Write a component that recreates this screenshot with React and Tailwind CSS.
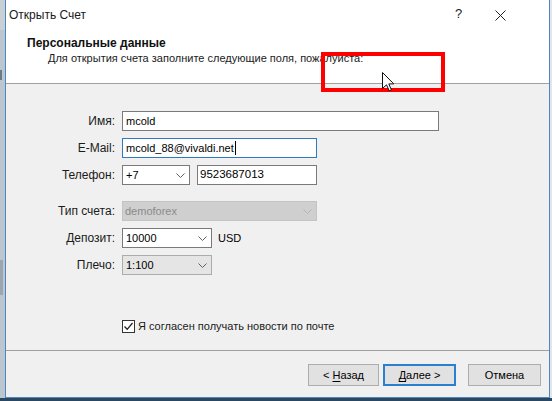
import React from "react";

function Chevron({ color = "#606060" }) {
  return (
    <svg width="9" height="5" viewBox="0 0 9 5">
      <path d="M0.5 0.5 L4.5 4.5 L8.5 0.5" fill="none" stroke={color} strokeWidth="1" />
    </svg>
  );
}

function Row({ label, top, children }) {
  return (
    <div className={`flex items-center h-[20px] ${top}`}>
      <div className="w-[109px] text-right text-[12px] leading-[14px] text-[#1a1a1a]">{label}</div>
      <div className="ml-[7px] flex items-center h-[20px]">{children}</div>
    </div>
  );
}

export default function App() {
  return (
    <div className="w-[552px] h-[401px] overflow-hidden relative bg-[#2b4862] flex flex-col font-['Liberation_Sans',Arial,sans-serif] text-black">
      <div className="flex h-[398px]">
        {/* background strip on the left */}
        <div className="w-[5px] h-full bg-[#bcc6ce] flex flex-col">
          <div className="h-[30px] bg-[#c8d0d6]" />
          <div className="h-[10px] w-[2px] bg-[#6b7a88] mt-[40px]" />
          <div className="h-[35px] w-[3px] bg-[#9aa7b3] mt-[180px]" />
        </div>
        {/* window */}
        <div className="w-[545px] h-full flex flex-col border-l border-r border-b border-[#4f86bf] bg-[#f0f0f0]">
          {/* header */}
          <div className="h-[84px] bg-white border-b border-[#a0a0a0] flex flex-col">
            <div className="h-[29px] flex items-center pl-[3px] relative">
              <span className="text-[12px] leading-[14px] text-[#1a1a1a]">Открыть Счет</span>
              <span className="absolute left-[449px] top-[7px] text-[13px] leading-[14px] text-[#222]">?</span>
              <svg className="absolute left-[489px] top-[10px]" width="11" height="11" viewBox="0 0 11 11">
                <path d="M0.5 0.5 L10.5 10.5 M10.5 0.5 L0.5 10.5" stroke="#222" strokeWidth="1" />
              </svg>
            </div>
            <div className="mt-[7px] pl-[21px] text-[12px] leading-[14px] font-bold text-[#111]">Персональные данные</div>
            <div className="mt-[1px] pl-[42px] text-[11px] leading-[14px] text-[#1a1a1a]">
              Для открытия счета заполните следующие поля, пожалуйста:
            </div>
          </div>
          {/* body */}
          <div className="h-[267px] flex flex-col border-b border-[#a0a0a0]">
            <Row label="Имя:" top="mt-[27px]">
              <div className="w-[317px] h-[20px] bg-white border border-[#7a7a7a] flex items-center pl-[3px] text-[11px]">mcold</div>
            </Row>
            <Row label="E-Mail:" top="mt-[7px]">
              <div className="w-[195px] h-[20px] bg-white border border-[#2f7bbd] flex items-center pl-[3px] text-[11px]">
                mcold_88@vivaldi.net
                <span className="w-[1px] h-[14px] bg-black ml-[1px]" />
              </div>
            </Row>
            <Row label="Телефон:" top="mt-[7px]">
              <div className="w-[68px] h-[20px] bg-white border border-[#7a7a7a] flex items-center pl-[3px] text-[11px]">
                <span className="flex-1">+7</span>
                <span className="w-[17px] flex items-center justify-center"><Chevron /></span>
              </div>
              <div className="ml-[7px] w-[120px] h-[20px] bg-white border border-[#7a7a7a] flex items-center pl-[2px] text-[11.5px]">9523687013</div>
            </Row>
            <Row label="Тип счета:" top="mt-[16px]">
              <div className="w-[195px] h-[20px] bg-[#cfcfcf] border border-[#c4c4c4] flex items-center pl-[2px] text-[11px] text-[#8a8a8a]">
                <span className="flex-1">demoforex</span>
                <span className="w-[17px] flex items-center justify-center"><Chevron color="#b5b5b5" /></span>
              </div>
            </Row>
            <Row label="Депозит:" top="mt-[7px]">
              <div className="w-[90px] h-[20px] bg-white border border-[#7a7a7a] flex items-center pl-[3px] text-[11px]">
                <span className="flex-1">10000</span>
                <span className="w-[17px] flex items-center justify-center"><Chevron /></span>
              </div>
              <span className="ml-[6px] text-[11px]">USD</span>
            </Row>
            <Row label="Плечо:" top="mt-[7px]">
              <div className="w-[90px] h-[20px] bg-[#e5e5e5] border border-[#acacac] flex items-center pl-[3px] text-[11px]">
                <span className="flex-1">1:100</span>
                <span className="w-[17px] flex items-center justify-center"><Chevron /></span>
              </div>
            </Row>
            <div className="mt-[44px] ml-[116px] flex items-center h-[14px]">
              <div className="w-[13px] h-[13px] bg-white border border-[#333] flex items-center justify-center">
                <svg width="11" height="11" viewBox="0 0 11 11">
                  <path d="M1.5 5.5 L4.2 8.3 L9.5 2" fill="none" stroke="#222" strokeWidth="1.3" />
                </svg>
              </div>
              <span className="ml-[3px] text-[11px] leading-[14px] text-[#1a1a1a]">Я согласен получать новости по почте</span>
            </div>
          </div>
          {/* buttons */}
          <div className="flex-1 flex items-start pt-[13px] pl-[302px]">
            <div className="w-[71px] h-[22px] bg-[#e1e1e1] border border-[#adadad] flex items-center justify-center text-[11px]">
              &lt;&nbsp;<span className="underline underline-offset-2">Н</span>азад
            </div>
            <div className="ml-[4px] w-[73px] h-[22px] bg-[#e1e1e1] border-2 border-[#2a7fcf] flex items-center justify-center text-[11px]">
              <span className="underline underline-offset-2">Д</span>алее&nbsp;&gt;
            </div>
            <div className="ml-[12px] w-[73px] h-[22px] bg-[#e1e1e1] border border-[#adadad] flex items-center justify-center text-[11px]">
              Отмена
            </div>
          </div>
        </div>
        <div className="w-[2px] h-full bg-[#dfe6ee]" />
      </div>
      <div className="h-[3px] bg-[#2b4862]" />

      {/* red annotation rectangle */}
      <div className="absolute left-[321px] top-[52px] w-[124px] h-[40px] border-[4px] border-[#ff0000]" />
      {/* mouse cursor */}
      <svg className="absolute left-[382px] top-[72px]" width="13" height="20" viewBox="0 0 13 20">
        <path d="M0.5 0.5 L0.5 16.5 L4.5 12.8 L7.2 18.8 L9.4 17.8 L6.8 11.9 L11.8 11.9 Z" fill="white" stroke="#111" strokeWidth="1" strokeLinejoin="round" />
      </svg>
    </div>
  );
}
